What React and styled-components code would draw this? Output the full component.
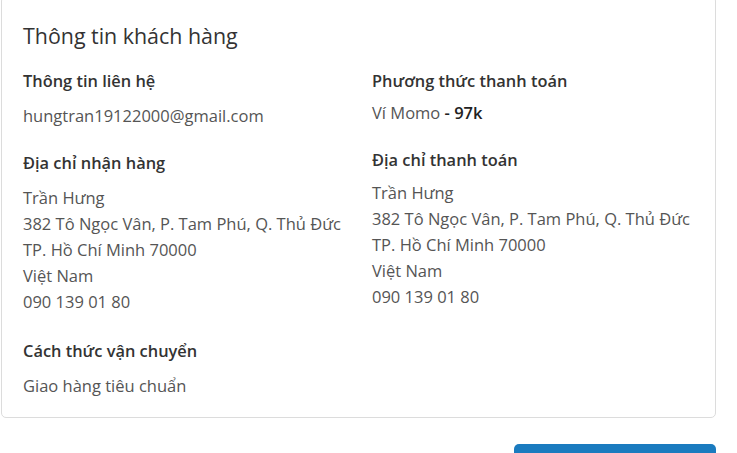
import styled, { createGlobalStyle } from 'styled-components'

const GlobalStyle = createGlobalStyle`
    body {
        margin: 0;
        background: #fff;
        font-family: "Open Sans", "Noto Sans", sans-serif;
        color: #333;
    }
`

const Page = styled.div`
    padding: 0 21px 0 1px;
`

const Card = styled.section`
    margin-top: -4px;
    border: 1px solid #dcdcdc;
    border-radius: 5px;
    padding: 24px 22px 18px 21px;
`

const CardTitle = styled.h2`
    margin: 0 0 18px 0;
    font-size: 21.4px;
    font-weight: 400;
    line-height: 30px;
    color: #333;
`

const Grid = styled.div`
    display: grid;
    grid-template-columns: 1fr 1fr;
    column-gap: 28px;
    align-items: start;
`

const Column = styled.div`
    display: flex;
    flex-direction: column;
`

const Section = styled.div`
    margin-bottom: ${(p) => p.$space ?? 22}px;
`

const SectionTitle = styled.h3`
    margin: 0 0 ${(p) => p.$gap ?? 10}px 0;
    font-size: 16.4px;
    font-weight: 600;
    line-height: 24px;
    color: #333;
`

const Text = styled.p`
    margin: 0;
    font-size: 16.5px;
    line-height: 26px;
    color: #555;
`

const Strong = styled.span`
    font-weight: 600;
    color: #222;
`

const Footer = styled.div`
    display: flex;
    justify-content: flex-end;
    padding-top: 26px;
`

const PrimaryButton = styled.button`
    width: 202px;
    height: 44px;
    border: none;
    border-radius: 5px;
    background: #1a7bbf;
    color: #fff;
`

const address = [
    'Trần Hưng',
    '382 Tô Ngọc Vân, P. Tam Phú, Q. Thủ Đức',
    'TP. Hồ Chí Minh 70000',
    'Việt Nam',
    '090 139 01 80',
]

function Address() {
    return address.map((line) => <Text key={line}>{line}</Text>)
}

export default function App() {
    return (
        <Page>
            <GlobalStyle />
            <Card>
                <CardTitle>Thông tin khách hàng</CardTitle>
                <Grid>
                    <Column>
                        <Section>
                            <SectionTitle>Thông tin liên hệ</SectionTitle>
                            <Text>hungtran19122000@gmail.com</Text>
                        </Section>
                        <Section $space={24}>
                            <SectionTitle>Địa chỉ nhận hàng</SectionTitle>
                            <Address />
                        </Section>
                        <Section $space={0}>
                            <SectionTitle>Cách thức vận chuyển</SectionTitle>
                            <Text>Giao hàng tiêu chuẩn</Text>
                        </Section>
                    </Column>
                    <Column>
                        <Section>
                            <SectionTitle $gap={7}>Phương thức thanh toán</SectionTitle>
                            <Text>Ví Momo <Strong>- 97k</Strong></Text>
                        </Section>
                        <Section $space={0}>
                            <SectionTitle $gap={8}>Địa chỉ thanh toán</SectionTitle>
                            <Address />
                        </Section>
                    </Column>
                </Grid>
            </Card>
            <Footer>
                <PrimaryButton type="button" />
            </Footer>
        </Page>
    )
}
